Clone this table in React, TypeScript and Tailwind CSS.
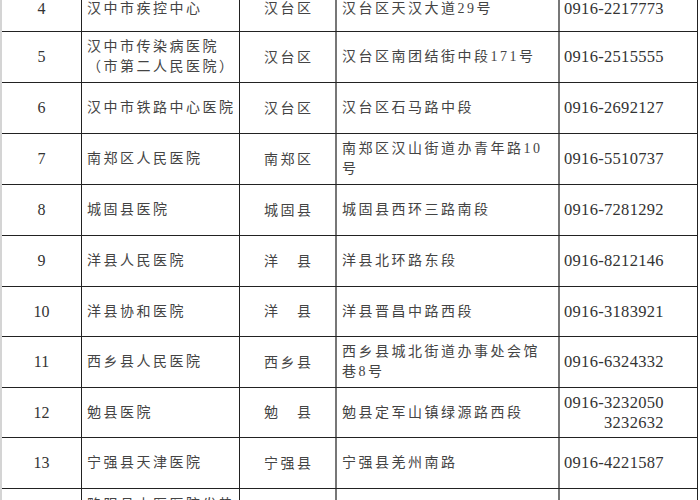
import React from "react";

type Row = {
  n: string;
  name: string[];
  d: string;
  addr: string[];
  ph: string[];
  h: string;
};

const rows: Row[] = [
  { n: "4", name: ["汉中市疾控中心"], d: "汉台区", addr: ["汉台区天汉大道29号"], ph: ["0916-2217773"], h: "h-[46px] -mt-[14px]" },
  { n: "5", name: ["汉中市传染病医院", "（市第二人民医院）"], d: "汉台区", addr: ["汉台区南团结街中段171号"], ph: ["0916-2515555"], h: "h-[51px]" },
  { n: "6", name: ["汉中市铁路中心医院"], d: "汉台区", addr: ["汉台区石马路中段"], ph: ["0916-2692127"], h: "h-[51px]" },
  { n: "7", name: ["南郑区人民医院"], d: "南郑区", addr: ["南郑区汉山街道办青年路10", "号"], ph: ["0916-5510737"], h: "h-[51px]" },
  { n: "8", name: ["城固县医院"], d: "城固县", addr: ["城固县西环三路南段"], ph: ["0916-7281292"], h: "h-[51px]" },
  { n: "9", name: ["洋县人民医院"], d: "洋　县", addr: ["洋县北环路东段"], ph: ["0916-8212146"], h: "h-[51px]" },
  { n: "10", name: ["洋县协和医院"], d: "洋　县", addr: ["洋县晋昌中路西段"], ph: ["0916-3183921"], h: "h-[50px]" },
  { n: "11", name: ["西乡县人民医院"], d: "西乡县", addr: ["西乡县城北街道办事处会馆", "巷8号"], ph: ["0916-6324332"], h: "h-[51px]" },
  { n: "12", name: ["勉县医院"], d: "勉　县", addr: ["勉县定军山镇绿源路西段"], ph: ["0916-3232050", "3232632"], h: "h-[50px]" },
  { n: "13", name: ["宁强县天津医院"], d: "宁强县", addr: ["宁强县羌州南路"], ph: ["0916-4221587"], h: "h-[51px]" },
  { n: "14", name: ["略阳县中医医院发热", "门诊（县第二人民医", "院）"], d: "略阳县", addr: ["略阳县城关镇南环路"], ph: ["0916-4822120"], h: "h-[72px]" },
];

const cjk = "font-['Liberation_Serif','Noto_Sans_CJK_SC',serif]";

export default function App() {
  return (
    <div className="w-[700px] h-[500px] overflow-hidden bg-white">
      <div className="w-[698px] border-l-2 border-[#d4d4d4]">
        {rows.map((r) => (
          <div
            key={r.n}
            className={`grid grid-cols-[80px_158px_97px_223px_138px] border-b border-[#222] ${r.h}`}
          >
            <div className="flex items-center justify-center border-r border-[#222] font-['Liberation_Serif',serif] text-[16px] text-[#333]">
              {r.n}
            </div>
            <div className={`flex flex-col justify-center border-r border-[#222] pl-[5px] ${cjk} text-[14px] leading-[20px] tracking-[2.5px] text-[#444]`}>
              {r.name.map((l, i) => (
                <div key={i} className="whitespace-nowrap">{l}</div>
              ))}
            </div>
            <div className={`flex items-center justify-center border-r-2 border-[#777] ${cjk} text-[14px] tracking-[2.5px] text-[#444]`}>
              <span className="pl-[2.5px]">{r.d}</span>
            </div>
            <div className={`flex flex-col justify-center border-r-2 border-[#777] pl-[5px] ${cjk} text-[14px] leading-[20px] tracking-[2.5px] text-[#444]`}>
              {r.addr.map((l, i) => (
                <div key={i} className="whitespace-nowrap">{l}</div>
              ))}
            </div>
            <div className="flex items-center border-r border-[#222] pl-[4px] font-['Liberation_Serif',serif] text-[16.5px] leading-[20px] tracking-[0.3px] text-[#333]">
              <div className="flex flex-col items-end">
                {r.ph.map((l, i) => (
                  <div key={i}>{l}</div>
                ))}
              </div>
            </div>
          </div>
        ))}
      </div>
    </div>
  );
}
